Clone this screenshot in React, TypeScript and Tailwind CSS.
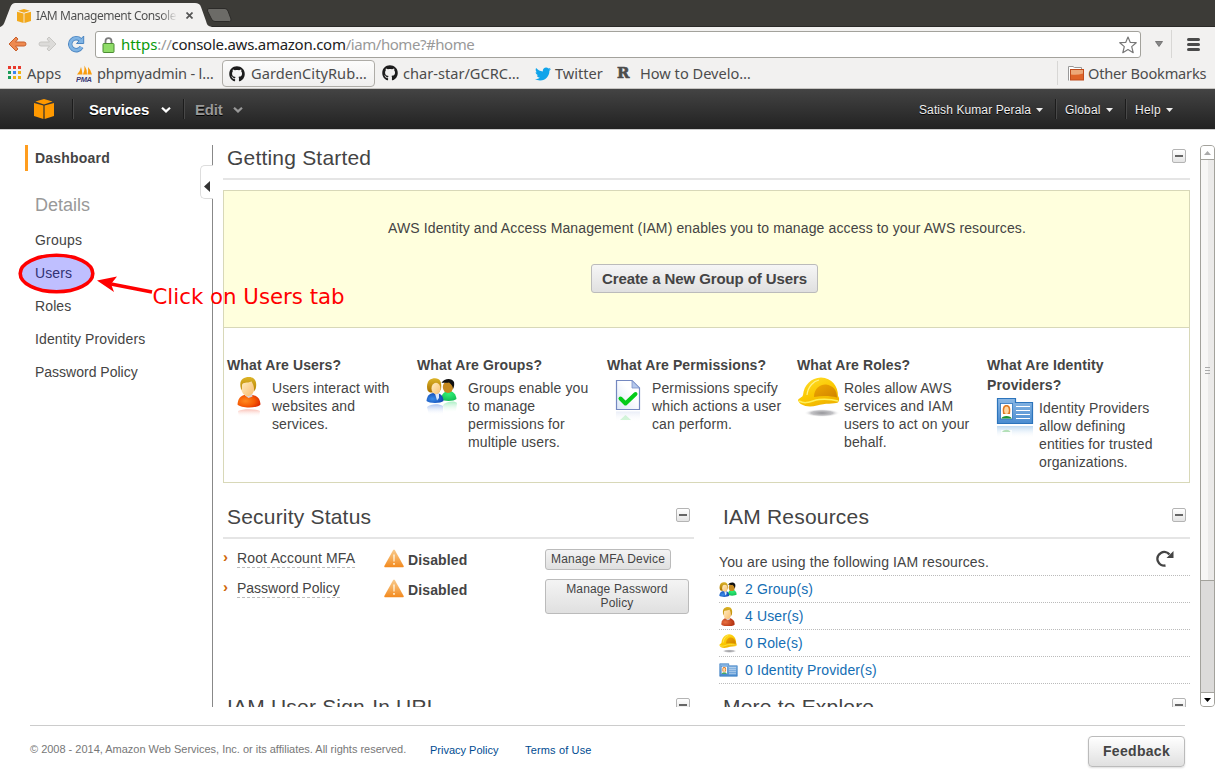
import React from "react";
import { FaGithub, FaTwitter } from "react-icons/fa";

const UI = "font-['Noto_Sans',sans-serif]";

function Cube({ className, color }: { className: string; color: string }) {
  return (
    <svg className={className} viewBox="0 0 20 20" fill={color}>
      <path d="M10 0 L18.6 2.6 L10 5.4 L1.4 2.6 Z" />
      <path d="M0 4 L9.4 6.6 V20 L0 17 Z" />
      <path d="M20 4 L10.6 6.6 V20 L20 17 Z" />
    </svg>
  );
}

function Chevron({ className }: { className: string }) {
  return (
    <svg className={className} viewBox="0 0 10 6" fill="none" stroke="currentColor" strokeWidth="2.2">
      <path d="M1 0.8 L5 4.4 L9 0.8" />
    </svg>
  );
}

function Caret() {
  return (
    <svg className="ml-[5px] mt-px h-[4px] w-[7px] text-[#eee]" viewBox="0 0 7 4" fill="currentColor">
      <path d="M0 0 H7 L3.5 4 Z" />
    </svg>
  );
}

function NavDivider({ className }: { className: string }) {
  return <div className={`h-5 w-0.5 border-l border-[#1c1c1c] border-r border-r-[#484848] ${className}`} />;
}

function Person({ className, small }: { className: string; small?: boolean }) {
  return (
    <svg className={className} viewBox={small ? "0 0 24 30" : "0 0 24 40"} preserveAspectRatio="none">
      <defs>
        <radialGradient id="shirt" cx="0.35" cy="0.5" r="0.8">
          <stop offset="0" stopColor="#ff8a20" />
          <stop offset="0.5" stopColor="#f65b04" />
          <stop offset="1" stopColor="#d01000" />
        </radialGradient>
        <radialGradient id="shirtDeep" cx="0.3" cy="0.5" r="0.8">
          <stop offset="0" stopColor="#e87040" />
          <stop offset="1" stopColor="#a82408" />
        </radialGradient>
        <linearGradient id="face" x1="0" x2="1" y1="0" y2="1">
          <stop offset="0" stopColor="#ffeec4" />
          <stop offset="1" stopColor="#f8bc6c" />
        </linearGradient>
        <linearGradient id="hair" x1="0" x2="0" y1="0" y2="1">
          <stop offset="0" stopColor="#dcb428" />
          <stop offset="1" stopColor="#b88400" />
        </linearGradient>
        <linearGradient id="shirtShade" x1="0" x2="0" y1="0" y2="1">
          <stop offset="0" stopColor="#f8a090" stopOpacity="0.7" />
          <stop offset="1" stopColor="#fff" stopOpacity="0" />
        </linearGradient>
      </defs>
      <path d="M0.500 27.500 C1 20 5 17.500 11.500 17.500 C18 17.500 23 20 23.500 27.500 C20 31.500 4 31.500 0.500 27.500 Z" fill={small ? "url(#shirtDeep)" : "url(#shirt)"} />
      <path d="M8 16 H15 L15.500 19.500 L11.500 21 L8 18.500 Z" fill="#d8d4dc" />
      <ellipse cx="10.800" cy="11.200" rx="6.600" ry="8" fill="url(#face)" />
      <path d="M4 12 C1.500 3 6 0 12 0 C18 0 20.500 5 18.600 12 L17 14.500 C17.500 10 16 7 14.500 4.500 C10 6.500 6 4.500 5 8 L4.800 13 Z" fill="url(#hair)" />
      {!small && <path d="M1 34 C6 31.500 18 31.500 23 34 L22 40 H2 Z" fill="url(#shirtShade)" />}
    </svg>
  );
}

function People({ className, small }: { className: string; small?: boolean }) {
  return (
    <svg className={className} viewBox={small ? "0 0 31 25" : "0 0 31 37"} preserveAspectRatio="none">
      <defs>
        <radialGradient id="blueShirt" cx="0.35" cy="0.6" r="0.8">
          <stop offset="0" stopColor="#3a8ce8" />
          <stop offset="1" stopColor="#0838a8" />
        </radialGradient>
        <radialGradient id="greenShirt" cx="0.5" cy="0.3" r="0.8">
          <stop offset="0" stopColor="#30f078" />
          <stop offset="1" stopColor="#10b850" />
        </radialGradient>
        <linearGradient id="fair" x1="0" x2="1" y1="0" y2="1">
          <stop offset="0" stopColor="#ffeec4" />
          <stop offset="1" stopColor="#f8c070" />
        </linearGradient>
        <linearGradient id="blond" x1="0" x2="0" y1="0" y2="1">
          <stop offset="0" stopColor="#dcb428" />
          <stop offset="1" stopColor="#a87000" />
        </linearGradient>
        <linearGradient id="blueMirror" x1="0" x2="0" y1="0" y2="1">
          <stop offset="0" stopColor="#86a8ea" stopOpacity="0.7" />
          <stop offset="1" stopColor="#fff" stopOpacity="0" />
        </linearGradient>
        <linearGradient id="greenMirror" x1="0" x2="0" y1="0" y2="1">
          <stop offset="0" stopColor="#86e8aa" stopOpacity="0.7" />
          <stop offset="1" stopColor="#fff" stopOpacity="0" />
        </linearGradient>
      </defs>
      <path d="M15 21 C16 14 20 13 23 13 C27 13 30 16 30.500 21 C28 23.500 17 23.500 15 21 Z" fill="url(#greenShirt)" />
      <ellipse cx="22" cy="9" rx="5.200" ry="6" fill="#c68a20" />
      <path d="M15.500 5 C18 0 26 -0.500 28 4 C28.500 7 28 9 27 11 C27 8 25 6 23 4.500 C20 5.500 18 4 15.500 5 Z" fill="#111" />
      <path d="M0.500 23 C1 16.500 5 15 9 15 C14 15 17 17 17.500 23 C15 25.500 3 25.500 0.500 23 Z" fill="url(#blueShirt)" />
      <path d="M9 15.500 H13 L13 20 L11 22.500 Z" fill="#dce8fc" />
      <path d="M1 9 C1 2 5 0.300 9 0.300 C14 0.300 16 4 15 11 L13 14.500 H4 C2 14 1 12 1 9 Z" fill="url(#blond)" />
      <ellipse cx="10" cy="10.500" rx="4.500" ry="5.800" fill="url(#fair)" />
      {!small && <path d="M1 29 C5 25.500 13 25.500 17 28 V37 H3 Z" fill="url(#blueMirror)" />}
      {!small && <path d="M17 27 C20 24 27 22 31 25 L30 33 L18 35 Z" fill="url(#greenMirror)" />}
    </svg>
  );
}

function Checklist({ className }: { className: string }) {
  return (
    <svg className={className} viewBox="0 0 26 43">
      <defs>
        <linearGradient id="paper" x1="0" x2="1" y1="1" y2="0">
          <stop offset="0" stopColor="#dbe6f6" />
          <stop offset="0.6" stopColor="#fff" />
        </linearGradient>
        <linearGradient id="paperMirror" x1="0" x2="0" y1="0" y2="1">
          <stop offset="0" stopColor="#ccd6ee" stopOpacity="0.7" />
          <stop offset="1" stopColor="#fff" stopOpacity="0" />
        </linearGradient>
      </defs>
      <path d="M1.500 1.500 H17 L24.500 9 V30.500 H1.500 Z" fill="url(#paper)" stroke="#7488c0" strokeWidth="1.200" />
      <path d="M17 1.500 V9 H24.500 Z" fill="#b4c8ec" stroke="#7c90c8" strokeWidth="0.800" />
      <path d="M5.500 19.500 L10.500 24.500 L20.500 15" fill="none" stroke="#04cc18" strokeWidth="4" strokeLinecap="round" strokeLinejoin="round" />
      <path d="M1 32.500 H25 V43 H1 Z" fill="url(#paperMirror)" opacity="0.6" />
      <path d="M5 41 L10.500 36 L16 41 Z" fill="#a8ecb4" opacity="0.5" />
    </svg>
  );
}

function HardHat({ className }: { className: string }) {
  return (
    <svg className={className} viewBox="0 0 43 40" preserveAspectRatio="none">
      <defs>
        <linearGradient id="shell" x1="0" x2="0.6" y1="0" y2="1">
          <stop offset="0" stopColor="#ffe030" />
          <stop offset="0.6" stopColor="#fbc800" />
          <stop offset="1" stopColor="#f0b400" />
        </linearGradient>
        <radialGradient id="hatShadow">
          <stop offset="0" stopColor="#949498" />
          <stop offset="0.6" stopColor="#b4b4b8" stopOpacity="0.8" />
          <stop offset="1" stopColor="#fff" stopOpacity="0" />
        </radialGradient>
        <linearGradient id="hatPanel" x1="0" x2="1" y1="0" y2="1">
          <stop offset="0" stopColor="#f0a800" />
          <stop offset="1" stopColor="#d08400" />
        </linearGradient>
      </defs>
      <ellipse cx="25" cy="36" rx="18" ry="4" fill="url(#hatShadow)" />
      <path d="M1 23 C3 20 5 21 6 18 C7 8 14 1 24 0.500 C35 1 41 9 41 19 C42.500 21 42.500 23 41 25.500 C37 27 28 26 20 28.500 C10 31 2 28 1 23 Z" fill="url(#shell)" />
      <path d="M17 20 C17 11 24 7 29 7.500 C36 8.500 40 13 40 20.500 C33 18.500 25 18.500 17 20 Z" fill="url(#hatPanel)" />
      <path d="M10 18 C11 9 17 4 22 3" fill="none" stroke="#fff28a" strokeWidth="1.200" />
      <path d="M2 24 C10 28 14 23.500 22 22.500 C30 22 36 22.500 41 24" fill="none" stroke="#fff05a" strokeWidth="1.500" />
    </svg>
  );
}

function IdCard({ className, small }: { className: string; small?: boolean }) {
  return (
    <svg className={className} viewBox={small ? "0 0 38 28" : "0 0 38 41"} preserveAspectRatio="none">
      <defs>
        <linearGradient id="card" x1="0" x2="0" y1="0" y2="1">
          <stop offset="0" stopColor="#8cb8e4" />
          <stop offset="1" stopColor="#4a8cd0" />
        </linearGradient>
        <linearGradient id="cardMirror" x1="0" x2="0" y1="0" y2="1">
          <stop offset="0" stopColor="#a8ccec" stopOpacity="0.75" />
          <stop offset="1" stopColor="#fff" stopOpacity="0" />
        </linearGradient>
      </defs>
      <path d="M1.500 1.500 H19.500 V5.500 H36.500 V26.500 H1.500 Z" fill="url(#card)" stroke="#2c74bc" strokeWidth="1.200" />
      <rect x="4.500" y="6.500" width="12" height="15.500" fill="#fff" stroke="#2c74bc" strokeWidth="0.800" />
      <path d="M7 17 C6 10 7.500 8 10.500 8 C13.500 8 15 10 14 17 Z" fill="#e07820" />
      <ellipse cx="10.500" cy="13.200" rx="2.300" ry="3.800" fill="#ffd8a4" />
      <path d="M5.500 21.500 C5.500 18 15.500 18 15.500 21.500 Z" fill="#1c9434" />
      <path d="M20 9.500 H34 M20 13.500 H34 M20 17.500 H34 M20 21.500 H34" stroke="#fff" strokeWidth="1.100" />
      {!small && <path d="M1 29 H37 V41 H1 Z" fill="url(#cardMirror)" />}
      {!small && <path d="M5 33 H16 V40 H5 Z" fill="#fff" opacity="0.7" />}
      {!small && <path d="M6 35 C8 32 13 32 14.500 35 Z" fill="#b4e0b8" />}
    </svg>
  );
}

function Warning() {
  return (
    <svg className="h-[19px] w-5" viewBox="0 0 20 19">
      <defs>
        <linearGradient id="amber" x1="0" x2="0" y1="0" y2="1">
          <stop offset="0" stopColor="#f8cc90" />
          <stop offset="1" stopColor="#f38a1e" />
        </linearGradient>
      </defs>
      <path d="M9.200 1 Q10 0 10.800 1 L19.700 17 Q20 18.200 19 18.200 H1 Q0 18.200 0.300 17 Z" fill="url(#amber)" />
      <path d="M9.200 5.500 H10.800 L10.600 12.500 H9.400 Z" fill="#fff0d4" />
      <rect x="9.200" y="14" width="1.600" height="1.800" fill="#fff0d4" />
    </svg>
  );
}

function Minus() {
  return (
    <div className="flex size-[14px] items-center justify-center rounded-[2px] border border-[#b4b4b4] bg-linear-to-b from-white to-[#e4e4e4]">
      <div className="h-0.5 w-2 bg-[#666]" />
    </div>
  );
}

function SectionHeader({ title }: { title: string }) {
  return (
    <div className="flex h-[35px] items-start justify-between border-b-2 border-[#e5e5e5] pl-1 pr-1">
      <h2 className="h-[26px] whitespace-nowrap text-[21px] leading-[26px] tracking-[0.2px]">{title}</h2>
      <div className="pt-1">
        <Minus />
      </div>
    </div>
  );
}

function Browser() {
  return (
    <>
      <div className="flex h-[27px] shrink-0 border-b border-[#2a2927] bg-[#3c3b37]">
        <div className="relative isolate flex h-[27px] w-[207px] items-center pl-[17px] pt-[4px]">
          <svg className="absolute inset-0 -z-10 h-[27px] w-[212px]" viewBox="0 0 212 27">
            <path d="M0 27 C3 26 4 24 5 21 L10 8 C11.500 4 13 3 16 3 H195 C198 3 200 4 201 7 L206 21 C207 25 208 26 212 27 Z" fill="#f2f1f0" />
          </svg>
          <Cube className="h-[14px] w-[14px]" color="#f2a91c" />
          <span className={`${UI} ml-[5px] w-[141px] overflow-hidden whitespace-nowrap bg-linear-to-r from-[#4c4c4c] from-88% to-[#f2f1f0] bg-clip-text text-[12px] leading-5 tracking-[-0.44px] text-transparent`}>
            IAM Management Console
          </span>
          <svg className="ml-[9px] size-[7px]" viewBox="0 0 7 7" stroke="#555" strokeWidth="1.700">
            <path d="M0.500 0.500 L6.500 6.500 M6.500 0.500 L0.500 6.500" />
          </svg>
        </div>
        <svg className="mt-[8px] h-[14px] w-[25px]" viewBox="0 0 25 14">
          <path d="M2 0.500 H18 Q20 0.500 21 3 L24 11 Q24.500 13.500 22.500 13.500 H8 Q5.500 13.500 4.500 11 L0.500 3 Q0 0.500 2 0.500 Z" fill="#6c6b67" stroke="#2c2b29" />
        </svg>
      </div>

      <div className="flex h-[34px] shrink-0 items-center bg-[#f2f1f0] pl-[8px]">
        <svg className="h-[16px] w-[19px]" viewBox="0 0 19 16">
          <path d="M8 1 L1 8 L8 15 L10 13 L7.500 10 H16 Q18 10 18 8 Q18 6 16 6 H7.500 L10 3 Z" fill="#ee8a50" stroke="#c8602c" strokeLinejoin="round" />
        </svg>
        <svg className="ml-[11px] h-[16px] w-[19px]" viewBox="0 0 19 16">
          <path d="M11 1 L18 8 L11 15 L9 13 L11.500 10 H3 Q1 10 1 8 Q1 6 3 6 H11.500 L9 3 Z" fill="#dcdbd9" stroke="#c8c7c4" strokeLinejoin="round" />
        </svg>
        <svg className="ml-[10px] size-[18px]" viewBox="0 0 18 18">
          <path d="M13.500 5 A6 6 0 1 0 14.500 12" fill="none" stroke="#4a84c0" strokeWidth="4.400" />
          <path d="M16.700 1 V8.500 H9.500 Z" fill="#80b4e4" stroke="#4a84c0" />
          <path d="M13.500 5 A6 6 0 1 0 14.500 12" fill="none" stroke="#80b4e4" strokeWidth="2.800" />
        </svg>
        <div className="ml-[10px] mt-[1px] flex h-[27px] w-[1046px] items-center rounded-[3px] border border-[#a3a29c] bg-white pl-[6px] pr-[3px]">
          <svg className="h-[16px] w-[13px]" viewBox="0 0 13 16">
            <path d="M3.500 7 V4.500 Q3.500 1.200 6.500 1.200 Q9.500 1.200 9.500 4.500 V7" fill="none" stroke="#7c7c7c" strokeWidth="1.800" />
            <rect x="1" y="6.500" width="11" height="9" rx="0.800" fill="#8fdc68" stroke="#4c8c34" />
          </svg>
          <span className={`${UI} -mt-0.5 ml-[6px] grow whitespace-nowrap text-[15px] leading-5 tracking-[-0.33px] text-[#999]`}>
            <span className="tracking-[-0.05px] text-[#0a9a0a]">https</span>://<span className="tracking-[-0.27px] text-[#222]">console.aws.amazon.com</span><span className="tracking-[-0.45px]">/iam/home?#home</span>
          </span>
          <svg className="size-[18px]" viewBox="0 0 18 18">
            <path d="M9 1 L11.300 6.400 L17.200 6.700 L12.700 10.600 L14.200 16.700 L9 13.500 L3.800 16.700 L5.300 10.600 L0.800 6.700 L6.700 6.400 Z" fill="#fff" stroke="#777" strokeWidth="1.200" strokeLinejoin="round" />
          </svg>
        </div>
        <svg className="ml-[14px] h-[6px] w-[8px]" viewBox="0 0 8 6">
          <path d="M0.500 0.500 H7.500 L4 5.500 Z" fill="#888" stroke="#666" strokeWidth="0.800" />
        </svg>
        <div className="ml-[8px] h-7 w-px bg-[#d8d7d5]" />
        <div className="ml-[15px] flex flex-col gap-0.5">
          <div className="h-[3px] w-[13px] rounded-sm bg-[#4a4a4a]" />
          <div className="h-[3px] w-[13px] rounded-sm bg-[#4a4a4a]" />
          <div className="h-[3px] w-[13px] rounded-sm bg-[#4a4a4a]" />
        </div>
      </div>

      <div className={`${UI} flex h-[28px] shrink-0 items-start border-b border-[#c6c4c1] bg-[#f2f1f0] pl-[8px] text-[14.600px] leading-[24px] text-[#4c4c4c]`}>
        <div className="mt-[5px] grid grid-cols-[3px_3px_3px] gap-[2px]">
          {["bg-[#e8392c]", "bg-[#e8392c]", "bg-[#e8392c]", "bg-[#1c9c58]", "bg-[#3c84f0]", "bg-[#f0b414]", "bg-[#1c9c58]", "bg-[#f0b414]", "bg-[#f0b414]"].map((c, i) => (
            <div key={i} className={`h-[3px] w-[3px] ${c}`} />
          ))}
        </div>
        <span className="ml-[6px] w-[36px] whitespace-nowrap">Apps</span>
        <svg className="ml-[13px] mt-[4px] h-[17px] w-[17px]" viewBox="0 0 17 17">
          <path d="M1 9.500 Q4 7 5 2 Q6 5 6.500 9.500 Z M7 9.500 Q9 5 8.500 0.500 Q11 4 11 9.500 Z M11.500 9.500 Q12.500 6 12 2 Q15 5 16 9.500 Z" fill="#f89c0e" />
          <text x="0" y="16.500" fontSize="7.500" fontWeight="bold" fontStyle="italic" fill="#3c3c78" textLength="16" fontFamily="Liberation Sans, sans-serif">PMA</text>
        </svg>
        <span className="ml-[4px] w-[117px] whitespace-nowrap tracking-[-0.18px]">phpmyadmin - l…</span>
        <div className="ml-[8px] mt-[-1px] flex h-[27px] w-[153px] items-center rounded-[4px] border border-[#aeaca7] bg-linear-to-b from-[#fcfcfc] to-[#f0efee] pl-[6px]">
          <FaGithub className="size-4 text-[#1c1c1c]" />
          <span className="-mt-0.5 ml-[6px] whitespace-nowrap tracking-[0.05px]">GardenCityRub…</span>
        </div>
        <FaGithub className="ml-[7px] mt-[4px] size-4 text-[#1c1c1c]" />
        <span className="ml-[5px] w-[117px] whitespace-nowrap">char-star/GCRC…</span>
        <FaTwitter className="ml-[15px] mt-[5px] size-4 text-[#10a4ea]" />
        <span className="ml-[4px] w-[49px] whitespace-nowrap">Twitter</span>
        <span className="ml-[13px] w-[14px] font-['DejaVu_Serif',serif] text-[15px] font-bold [-webkit-text-stroke:0.6px_#4c4c4c]">R</span>
        <span className="ml-[9px] w-[112px] whitespace-nowrap">How to Develo…</span>
        <div className="ml-auto h-6 w-px bg-[#d8d7d5]" />
        <svg className="ml-[10px] mt-[5px] h-[15px] w-[16px]" viewBox="0 0 16 15">
          <path d="M0.500 14.500 V0.500 H5 L6.500 1.500 H13.500 V4" fill="#fff" stroke="#999" />
          <rect x="2.500" y="3.500" width="13" height="10.500" fill="#de6428" stroke="#c04c1c" />
          <path d="M3 4 H15 V7.500 Q9 9.500 3 8.500 Z" fill="#eca878" />
        </svg>
        <span className="ml-[4px] w-[127px] whitespace-nowrap tracking-[-0.2px]">Other Bookmarks</span>
      </div>
    </>
  );
}

function ConsoleNav() {
  return (
    <div className="flex h-10 shrink-0 items-center bg-linear-to-b from-[#444] to-[#222] pl-[34px] text-white [text-shadow:0_1px_0_#000]">
      <Cube className="size-5" color="#ff9900" />
      <NavDivider className="ml-[18px]" />
      <span className="ml-[15px] mt-0.5 w-[61px] whitespace-nowrap text-[15px] font-bold tracking-[-0.2px]">Services</span>
      <Chevron className="ml-[11px] mt-0.5 h-[6px] w-[10px]" />
      <NavDivider className="ml-[12px]" />
      <span className="ml-[10px] mt-0.5 w-[28px] whitespace-nowrap text-[15px] font-bold tracking-[-0.2px] text-[#999]">Edit</span>
      <Chevron className="ml-[10px] mt-0.5 h-[6px] w-[10px] text-[#999]" />
      <div className="ml-auto flex items-center text-[12px] text-[#eee]">
        <span className="mt-0.5 w-[112px] whitespace-nowrap tracking-[0.1px]">Satish Kumar Perala</span>
        <Caret />
        <NavDivider className="ml-[12px]" />
        <span className="ml-[8px] mt-0.5 w-[36px] whitespace-nowrap tracking-[0.15px]">Global</span>
        <Caret />
        <NavDivider className="ml-[12px]" />
        <span className="ml-[8px] mt-0.5 w-[26px] whitespace-nowrap tracking-[0.3px]">Help</span>
        <Caret />
        <div className="w-[42px]" />
      </div>
    </div>
  );
}

function Sidebar() {
  return (
    <nav className="w-[200px] shrink-0 pl-[25px]">
      <div className="h-[26px] border-l-[3px] border-[#ff9d1e] pl-[7px] font-bold leading-[26px] tracking-[0.2px]">Dashboard</div>
      <div className="mt-[23px] h-[22px] pl-[10px] text-[18px] leading-[22px] tracking-normal text-[#999]">Details</div>
      <ul className="mt-[8px] pl-[10px] leading-[33px]">
        <li className="tracking-[0.2px]">Groups</li>
        <li>Users</li>
        <li>Roles</li>
        <li>Identity Providers</li>
        <li className="tracking-normal">Password Policy</li>
      </ul>
    </nav>
  );
}

type Topic = { title: string; text: string; icon: React.ReactNode; iconBox: string };

const topics: Topic[] = [
  { title: "What Are Users?", text: "Users interact with websites and services.", iconBox: "w-[45px] pl-[10px] pt-[2px]", icon: <Person className="h-[40px] w-[24px]" /> },
  { title: "What Are Groups?", text: "Groups enable you to manage permissions for multiple users.", iconBox: "w-[51px] pl-[9px] pt-[3px]", icon: <People className="h-[37px] w-[31px]" /> },
  { title: "What Are Permissions?", text: "Permissions specify which actions a user can perform.", iconBox: "w-[45px] pl-[8px] pt-[4px]", icon: <Checklist className="h-[43px] w-[26px]" /> },
  { title: "What Are Roles?", text: "Roles allow AWS services and IAM users to act on your behalf.", iconBox: "w-[47px] pl-[0px] pt-[2px]", icon: <HardHat className="h-[40px] w-[43px]" /> },
  { title: "What Are Identity Providers?", text: "Identity Providers allow defining entities for trusted organizations.", iconBox: "w-[52px] pl-[9px] pt-[2px]", icon: <IdCard className="h-[41px] w-[38px]" /> },
];

function StatusRow({ label, labelClass, children }: { label: string; labelClass: string; children: React.ReactNode }) {
  return (
    <div className="flex items-start leading-[18px]">
      <span className="-mt-px w-[14px] text-[15px] font-bold text-[#d06808]">›</span>
      <div className="w-[147px]">
        <span className={`inline-block whitespace-nowrap border-b border-dashed border-[#bbb] leading-[17px] ${labelClass}`}>{label}</span>
      </div>
      <Warning />
      <span className="ml-[4px] mt-[2px] w-[137px] font-bold">Disabled</span>
      {children}
    </div>
  );
}

function Dashboard() {
  const resources = [
    { label: "2 Group(s)", icon: <People small className="h-[15px] w-[18px]" /> },
    { label: "4 User(s)", icon: <Person small className="ml-[2px] h-[19px] w-[14px]" /> },
    { label: "0 Role(s)", icon: <HardHat className="mt-px h-[19px] w-[18px]" /> },
    { label: "0 Identity Provider(s)", icon: <IdCard small className="h-[14px] w-[19px]" /> },
  ];
  const button = "rounded-[3px] border border-[#bbb] bg-linear-to-b from-[#f4f4f4] to-[#e0e0e0] text-center text-[12px] leading-[14px]";
  return (
    <main className="ml-[10px] h-[562px] w-[967px] shrink-0 overflow-hidden">
      <SectionHeader title="Getting Started" />
      <section className="mt-[10px] h-[293px] border border-[#d8d8b8]">
        <div className="flex h-[137px] flex-col items-center border-b border-[#d8d8b8] bg-[#ffffdd] pt-[28px]">
          <p className="whitespace-nowrap pl-px leading-[18px]">
            AWS Identity and Access Management (IAM) enables you to manage access to your AWS resources.
          </p>
          <button className="mr-[4px] mt-[27px] h-[29px] w-[227px] whitespace-nowrap rounded-[3px] border border-[#bbb] bg-linear-to-b from-[#f6f6f6] to-[#e0e0e0] pt-0.5 text-[15px] font-bold tracking-[-0.09px]">
            Create a New Group of Users
          </button>
        </div>
        <div className="flex pl-[3px] pt-[27px]">
          {topics.map((t) => (
            <div key={t.title} className="w-[190px] pr-[10px]">
              <h3 className="font-bold leading-5">{t.title}</h3>
              <div className="mt-[4px] flex">
                <div className={`-mt-[4px] shrink-0 ${t.iconBox}`}>{t.icon}</div>
                <p className="w-[133px] shrink-0 leading-[18px]">{t.text}</p>
              </div>
            </div>
          ))}
        </div>
      </section>

      <div className="mt-[21px] flex justify-between">
        <section className="h-[190px] w-[471px]">
          <SectionHeader title="Security Status" />
          <div className="mt-[10px] flex flex-col gap-[10px]">
            <div className="h-5">
              <StatusRow label="Root Account MFA" labelClass="tracking-[0.14px]">
                <button className={`${button} h-[21px] w-[126px] whitespace-nowrap pb-0.5 tracking-[0.2px]`}>Manage MFA Device</button>
              </StatusRow>
            </div>
            <StatusRow label="Password Policy" labelClass="tracking-normal">
              <button className={`${button} h-[35px] w-[144px] px-4 pb-0.5 tracking-[0.15px]`}>Manage Password Policy</button>
            </StatusRow>
          </div>
        </section>
        <section className="h-[190px] w-[471px]">
          <SectionHeader title="IAM Resources" />
          <div className="flex h-[37px] items-start justify-between border-b border-dotted border-[#bbb] pr-4 pt-[11px]">
            <span className="mt-[3px] leading-[18px]">You are using the following IAM resources.</span>
            <svg className="size-[18px]" viewBox="0 0 18 18">
              <path d="M9.500 15.500 A6.800 6.800 0 1 1 13.500 4.500" fill="none" stroke="#444" strokeWidth="2.400" />
              <path d="M17.500 1 V8 H10.500 Z" fill="#444" />
            </svg>
          </div>
          {resources.map((r) => (
            <div key={r.label} className="flex h-[27px] items-center border-b border-dotted border-[#bbb] text-[#146eb4]">
              <div className="w-[26px]">{r.icon}</div>
              <span>{r.label}</span>
            </div>
          ))}
        </section>
      </div>
      <div className="flex justify-between">
        <div className="w-[471px]">
          <SectionHeader title="IAM User Sign-In URL" />
        </div>
        <div className="w-[471px]">
          <SectionHeader title="More to Explore" />
        </div>
      </div>
    </main>
  );
}

function Scrollbar() {
  return (
    <div className="ml-[10px] flex h-[562px] w-[15px] shrink-0 flex-col overflow-hidden rounded-[4px] border border-[#a3a29c] bg-[#dcdbda]">
      <div className="flex h-[14px] shrink-0 items-center justify-center border-b border-[#a3a29c] bg-white">
        <svg className="h-1 w-[7px]" viewBox="0 0 7 4" fill="#aaa"><path d="M0 4 H7 L3.500 0 Z" /></svg>
      </div>
      <div className="flex h-[421px] shrink-0 flex-col items-center justify-center gap-0.5 border-b border-[#a3a29c] bg-linear-to-r from-[#f7f6f5] from-50% to-[#ebeae9] to-50%">
        <div className="h-px w-[5px] bg-[#aaa]" />
        <div className="h-px w-[5px] bg-[#aaa]" />
        <div className="h-px w-[5px] bg-[#aaa]" />
      </div>
      <div className="grow" />
      <div className="flex h-[14px] shrink-0 items-center justify-center border-t border-[#a3a29c] bg-white">
        <svg className="h-1 w-[7px]" viewBox="0 0 7 4" fill="#000"><path d="M0 0 H7 L3.500 4 Z" /></svg>
      </div>
    </div>
  );
}

export default function App() {
  return (
    <div className="relative flex h-[776px] w-[1215px] flex-col overflow-hidden bg-white font-['Liberation_Sans',Arial,sans-serif] text-[14px] text-[#444]">
      <Browser />
      <ConsoleNav />
      <div className="flex h-[578px] shrink-0 border-t border-[#ccc] pt-[15px] tracking-[0.12px]">
        <Sidebar />
        <div className="flex w-[13px] shrink-0 flex-col">
          <div className="h-5 border-r border-[#888]" />
          <div className="flex h-[34px] items-center rounded-l-[5px] border border-r-0 border-[#ddd] pl-[3px] pt-[9px]">
            <svg className="h-[11px] w-[6px]" viewBox="0 0 6 11" fill="#333"><path d="M6 0 V11 L0 5.500 Z" /></svg>
          </div>
          <div className="grow border-r border-[#888]" />
        </div>
        <Dashboard />
        <Scrollbar />
      </div>
      <footer className="ml-[30px] mt-[18px] flex h-[51px] w-[1155px] items-start border-t border-[#ccc] text-[11px] leading-[14px]">
        <span className="mt-[16px] w-[400px] whitespace-nowrap tracking-[-0.01px] text-[#777]">
          © 2008 - 2014, Amazon Web Services, Inc. or its affiliates. All rights reserved.
        </span>
        <a className="mt-[17px] w-[95px] whitespace-nowrap text-[#004b91]">Privacy Policy</a>
        <a className="mt-[17px] whitespace-nowrap tracking-[0.15px] text-[#004b91]">Terms of Use</a>
        <button className="ml-auto mt-[10px] h-[31px] w-[97px] rounded-[4px] border border-[#bbb] bg-linear-to-b from-white to-[#e0e0e0] pb-0.5 text-[14px] font-bold tracking-[0.3px] shadow-[0_1px_2px_#ddd]">
          Feedback
        </button>
      </footer>

      <svg className="absolute left-[16px] top-[250px] h-[50px] w-[142px]" viewBox="16 250 142 50">
        <ellipse cx="56.500" cy="273.500" rx="36.300" ry="18.300" fill="#0000ff" fillOpacity="0.25" stroke="#f00" strokeWidth="3.600" />
        <path d="M111 284 L152 292" stroke="#f00" strokeWidth="3.600" />
        <path d="M97 280.500 L117 276.500 L111 284 L114 292 Z" fill="#f00" />
      </svg>
      <span className="absolute left-[152.500px] top-[284px] whitespace-nowrap font-['DejaVu_Sans',sans-serif] text-[21.300px] leading-[25px] text-[#ff0000]">
        Click on Users tab
      </span>
    </div>
  );
}
